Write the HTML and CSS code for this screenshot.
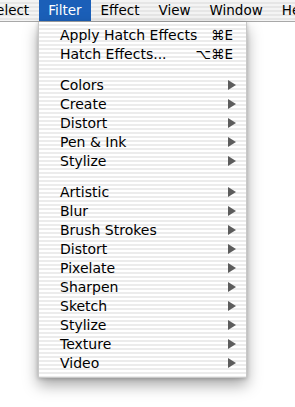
FILE: index.html
```html
<!DOCTYPE html>
<html lang="en">
<head>
    <meta charset="UTF-8">
    <meta name="viewport" content="width=device-width, initial-scale=1.0">
    <title>Filter menu</title>
    <link rel="stylesheet" href="styles.css">
</head>
<body>
    <div class="screen">
        <div class="menubar">
            <ul class="menubar-items">
                <li class="menubar-item">Select</li>
                <li class="menubar-item active">Filter</li>
                <li class="menubar-item">Effect</li>
                <li class="menubar-item">View</li>
                <li class="menubar-item">Window</li>
                <li class="menubar-item">Help</li>
            </ul>
        </div>

        <ul class="dropdown">
            <li class="menu-item"><span>Apply Hatch Effects</span><span class="shortcut">&#8984;E</span></li>
            <li class="menu-item"><span>Hatch Effects...</span><span class="shortcut">&#8997;&#8984;E</span></li>
            <li class="separator"></li>
            <li class="menu-item sub">Colors</li>
            <li class="menu-item sub">Create</li>
            <li class="menu-item sub">Distort</li>
            <li class="menu-item sub">Pen &amp; Ink</li>
            <li class="menu-item sub">Stylize</li>
            <li class="separator"></li>
            <li class="menu-item sub">Artistic</li>
            <li class="menu-item sub">Blur</li>
            <li class="menu-item sub">Brush Strokes</li>
            <li class="menu-item sub">Distort</li>
            <li class="menu-item sub">Pixelate</li>
            <li class="menu-item sub">Sharpen</li>
            <li class="menu-item sub">Sketch</li>
            <li class="menu-item sub">Stylize</li>
            <li class="menu-item sub">Texture</li>
            <li class="menu-item sub">Video</li>
        </ul>
    </div>
</body>
</html>
```

FILE: styles.css
```css
* {
    box-sizing: border-box;
    margin: 0;
    padding: 0;
}

body {
    background-color: #fff;
    color: #000;
    font-family: 'DejaVu Sans', 'Liberation Sans', sans-serif;
    font-size: 14px;
}

ul {
    list-style: none;
}

.screen {
    position: relative;
    width: 295px;
    height: 407px;
    overflow: hidden;
}

.menubar {
    height: 22px;
    overflow: hidden;
    background: repeating-linear-gradient(to bottom, #f4f4f4 0, #f4f4f4 2px, #e6e6e6 2px, #e6e6e6 4px);
    border-bottom: 1px solid #a8a8a8;
}

.menubar-items {
    display: flex;
    margin-left: -22px;
    white-space: nowrap;
}

.menubar-item {
    padding: 0 9.5px;
    font-size: 13.5px;
    line-height: 21px;
}

.menubar-item.active {
    background-color: #1b5fb8;
    color: #fff;
}

.dropdown {
    position: absolute;
    top: 22px;
    left: 38px;
    width: 209px;
    padding: 3px 0 5px;
    background: repeating-linear-gradient(to bottom, #ffffff 0, #ffffff 2px, #ececec 2px, #ececec 4px);
    border: 1px solid #c8c8c8;
    border-top: none;
    box-shadow: 0 7px 14px rgba(0, 0, 0, 0.35), 0 1px 4px rgba(0, 0, 0, 0.2);
}

.menu-item {
    display: flex;
    justify-content: space-between;
    align-items: center;
    height: 19px;
    padding: 0 13px 0 21px;
}

.shortcut {
    font-size: 13.5px;
}

.sub::after {
    content: "";
    width: 0;
    height: 0;
    margin-right: -3px;
    border-top: 5px solid transparent;
    border-bottom: 5px solid transparent;
    border-left: 8px solid #5c5c5c;
}

.separator {
    height: 12px;
}
```
